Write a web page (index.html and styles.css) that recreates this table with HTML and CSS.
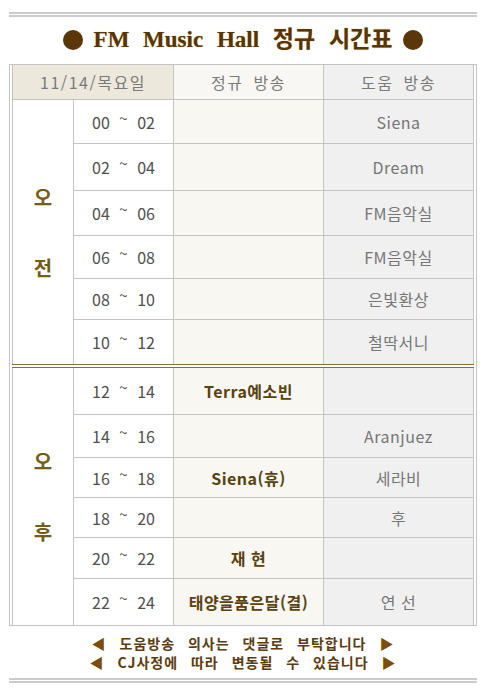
FILE: index.html
```html
<!DOCTYPE html>
<html lang="ko">
<head>
<meta charset="utf-8">
<title>FM Music Hall 정규 시간표</title>
<link rel="stylesheet" href="styles.css">
</head>
<body>
<div class="page">
  <div class="rule"></div>
  <h1 class="title"><span class="dot"></span><span class="title-text">FM Music Hall 정규 시간표</span><span class="dot"></span></h1>
  <div class="sheet">
    <div class="head">
      <div class="hcell hdate">11/14/목요일</div>
      <div class="hcell hreg">정규 방송</div>
      <div class="hcell hhelp">도움 방송</div>
    </div>
    <div class="block am">
      <div class="ampm">오<br><br>전</div>
      <div class="cell time"><span>00 <span class="tl">~</span> 02</span></div><div class="cell reg"></div><div class="cell help">Siena</div>
      <div class="cell time"><span>02 <span class="tl">~</span> 04</span></div><div class="cell reg"></div><div class="cell help">Dream</div>
      <div class="cell time"><span>04 <span class="tl">~</span> 06</span></div><div class="cell reg"></div><div class="cell help">FM음악실</div>
      <div class="cell time"><span>06 <span class="tl">~</span> 08</span></div><div class="cell reg"></div><div class="cell help">FM음악실</div>
      <div class="cell time"><span>08 <span class="tl">~</span> 10</span></div><div class="cell reg"></div><div class="cell help">은빛환상</div>
      <div class="cell time"><span>10 <span class="tl">~</span> 12</span></div><div class="cell reg"></div><div class="cell help">철딱서니</div>
    </div>
    <div class="divider"></div>
    <div class="block pm">
      <div class="ampm">오<br><br>후</div>
      <div class="cell time"><span>12 <span class="tl">~</span> 14</span></div><div class="cell reg">Terra예소빈</div><div class="cell help"></div>
      <div class="cell time"><span>14 <span class="tl">~</span> 16</span></div><div class="cell reg"></div><div class="cell help">Aranjuez</div>
      <div class="cell time"><span>16 <span class="tl">~</span> 18</span></div><div class="cell reg">Siena(휴)</div><div class="cell help">세라비</div>
      <div class="cell time"><span>18 <span class="tl">~</span> 20</span></div><div class="cell reg"></div><div class="cell help">후</div>
      <div class="cell time"><span>20 <span class="tl">~</span> 22</span></div><div class="cell reg">재 현</div><div class="cell help"></div>
      <div class="cell time"><span>22 <span class="tl">~</span> 24</span></div><div class="cell reg">태양을품은달(결)</div><div class="cell help">연 선</div>
    </div>
  </div>
  <div class="notes">
    <p class="note"><span class="tri">◀</span> 도움방송 의사는 댓글로 부탁합니다 <span class="tri">▶</span></p>
    <p class="note"><span class="tri">◀</span> CJ사정에 따라 변동될 수 있습니다 <span class="tri">▶</span></p>
  </div>
  <div class="rule"></div>
</div>
</body>
</html>
```

FILE: styles.css
```css
html, body {
  margin: 0;
  padding: 0;
  background: #ffffff;
}

.page {
  width: 486px;
  padding-top: 12px;
  font-family: "Noto Sans CJK KR", "Noto Sans", sans-serif;
}

.rule {
  margin: 0 9px;
  height: 1px;
  border-top: 2px solid #cbcbcb;
  border-bottom: 2px solid #cbcbcb;
}

.title {
  margin: 0;
  height: 47px;
  display: flex;
  align-items: center;
  justify-content: center;
  gap: 11px;
  padding-bottom: 2px;
  box-sizing: border-box;
}

.title-text {
  font-family: "Liberation Serif", "Noto Sans CJK KR", serif;
  font-size: 23px;
  font-weight: 700;
  color: #573508;
  word-spacing: 8px;
  text-shadow: 0 0 1px #c9a050;
  line-height: 30px;
}

.dot {
  width: 20px;
  height: 20px;
  border-radius: 50%;
  background: #5a3609;
  flex: none;
}

.sheet {
  margin: 0 9px;
  border: 1px solid #c4c4c4;
  padding: 0 2px;
}

.head {
  display: grid;
  grid-template-columns: 160px 149px 149px;
  grid-template-rows: 34px;
  gap: 1px;
  padding: 0 1px 1px;
  background: #c4c4c4;
}

.hcell {
  display: flex;
  align-items: center;
  justify-content: center;
  font-size: 16px;
  color: #7a7a7a;
  letter-spacing: 1.5px;
  word-spacing: 4px;
}

.hdate { background: #ece8db; }
.hreg { background: #f8f7f3; }
.hhelp { background: #f0f0f0; }

.block {
  display: grid;
  grid-template-columns: 60px 99px 149px 149px;
  gap: 1px;
  padding: 0 1px;
  background: #c4c4c4;
}

.am { grid-template-rows: 43px 46px 44px 42px 40px 44px; }
.pm { grid-template-rows: 46px 42px 39px 39px 40px 46px; }

.ampm {
  grid-row: span 6;
  background: #ffffff;
  display: flex;
  align-items: center;
  justify-content: center;
  text-align: center;
  font-size: 20px;
  font-weight: 700;
  line-height: 35px;
  color: #735d16;
}

.cell {
  display: flex;
  align-items: center;
  justify-content: center;
  font-size: 16px;
  white-space: pre;
}

.time {
  background: #ffffff;
  color: #505050;
  word-spacing: 5px;
}

.tl {
  vertical-align: 5px;
  font-size: 15px;
  line-height: 1;
}

.reg {
  background: #f8f7f2;
  color: #5a4210;
  font-weight: 700;
  letter-spacing: 0.5px;
}

.help {
  background: #f0f0f0;
  color: #767676;
  letter-spacing: 0.5px;
}

.divider {
  height: 2px;
  border-top: 1px solid #8b6e3c;
  border-bottom: 1px solid #8b6e3c;
  background: #ffffff;
}

.notes {
  padding: 8px 0 6px;
}

.note {
  margin: 0;
  text-align: center;
  font-size: 14px;
  line-height: 19px;
  font-weight: 700;
  color: #5c3c0c;
  letter-spacing: 1px;
  word-spacing: 8px;
}

.tri {
  color: #7a4e0c;
}
```
